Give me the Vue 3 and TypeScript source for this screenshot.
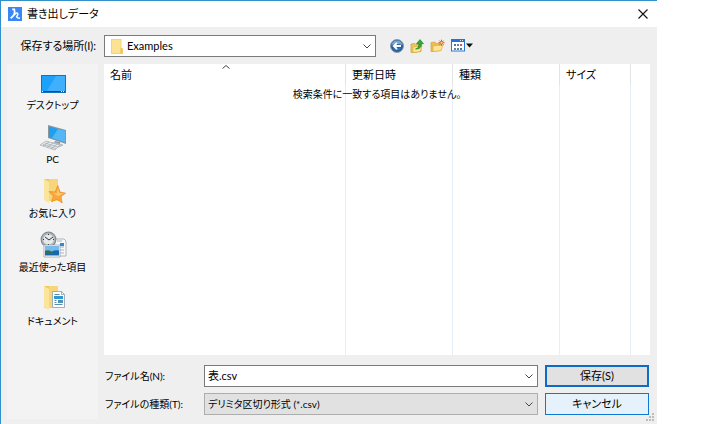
<script setup lang="ts">
import { ref } from 'vue'

type PlaceIcon = 'desktop' | 'pc' | 'favorites' | 'recent' | 'documents'

interface Place {
  icon: PlaceIcon
  label: string
}

const places: Place[] = [
  { icon: 'desktop', label: 'デスクトップ' },
  { icon: 'pc', label: 'PC' },
  { icon: 'favorites', label: 'お気に入り' },
  { icon: 'recent', label: '最近使った項目' },
  { icon: 'documents', label: 'ドキュメント' },
]

const folder = ref('Examples')
const fileName = ref('表.csv')
const fileType = ref('csv')
</script>

<template>
  <main class="page">
    <form class="dialog" @submit.prevent>
      <header class="titlebar">
        <svg class="app-icon" viewBox="0 0 14 14" aria-hidden="true">
          <rect width="14" height="14" fill="#3b86f7" />
          <path d="M4.200 2.300H6.300C7.200 5.500 6 9 2.600 11.300" fill="none" stroke="#fff" stroke-width="1.700" />
          <path d="M6.300 8.200C7.200 6.300 8.800 5.600 9.700 6.500C10.600 7.600 8.800 9 8.600 9.800C9.200 10.900 10.500 11.100 12 11.200" fill="none" stroke="#fff" stroke-width="1.500" />
        </svg>
        <h1>書き出しデータ</h1>
        <button class="close" type="button" aria-label="閉じる">
          <svg viewBox="0 0 10 10"><path d="M.5.5l9 9M9.500.5l-9 9" fill="none" stroke="#111" stroke-width="1.1" /></svg>
        </button>
      </header>

      <div class="location">
        <label for="folder">保存する場所(I):</label>
        <div class="combo folder">
          <svg class="folder-icon" viewBox="0 0 12 15" aria-hidden="true">
            <path d="M0 0h10.500v9l1.500 1v5H0z" fill="#f5d374" />
            <path d="M1 1h8.500v13H1z" fill="#fde294" />
            <path d="M9.500 9.500l2-.5v5.500h-2z" fill="#efc553" />
          </svg>
          <select id="folder" v-model="folder">
            <option>Examples</option>
          </select>
          <svg class="chevron" viewBox="0 0 8 5" aria-hidden="true"><path d="M.5.5L4 4L7.500.5" /></svg>
        </div>
        <div class="tools">
          <button type="button" aria-label="戻る">
            <svg width="14" height="14" viewBox="0 0 14 14">
              <circle cx="7" cy="7" r="6.500" fill="#285f9c" stroke="#8f9ba8" />
              <path d="M1.500 6a5.600 5.600 0 0 1 11 0q-5.500-2-11 0z" fill="#77a8d4" />
              <path d="M3 9a5 5 0 0 0 8 0q-4 2-8 0z" fill="#36a5de" />
              <path d="M11 7H4M7 3.800L3.800 7L7 10.200" fill="none" stroke="#fff" stroke-width="1.900" />
            </svg>
          </button>
          <button type="button" aria-label="上のフォルダーへ">
            <svg width="14" height="14" viewBox="0 0 14 14">
              <path d="M1 5l4-.5 1 1 5-.5v7.500l-7 1H1z" fill="#edc65f" stroke="#d09d31" stroke-width=".7" />
              <path d="M3 8l9-1-2 5.500-7 1z" fill="#ffe995" stroke="#d5a93d" stroke-width=".6" />
              <path d="M5.500 10C8 9.500 9 7.500 8.800 4.700H6.500L10 .6l3.500 4.100h-2C11.500 8 9.500 10.500 5.500 10z" fill="#34a832" stroke="#187c20" stroke-width=".6" />
            </svg>
          </button>
          <button type="button" aria-label="新しいフォルダー">
            <svg width="15" height="14" viewBox="0 0 15 14">
              <path d="M1 3.500l4-.5 1 1.500 5-.5v7.500l-8 1H1z" fill="#edbd55" stroke="#d8a23b" stroke-width=".7" />
              <path d="M3 7l10-1-2 5.500-8 1z" fill="#ffe696" stroke="#dda93f" stroke-width=".6" />
              <path d="M11.500.7v6M8.500 3.700h6M9.400 1.600l4.200 4.200M13.600 1.600L9.400 5.800" stroke="#e7502b" stroke-width="1" />
              <circle cx="11.500" cy="3.700" r="1" fill="#ffe277" />
            </svg>
          </button>
          <button type="button" aria-label="表示メニュー">
            <svg width="22" height="13" viewBox="0 0 22 13">
              <rect x=".5" y=".5" width="13" height="11.500" fill="#fff" stroke="#2877d2" />
              <path d="M0 0h14v3H0z" fill="#2374d5" />
              <path d="M9 1h1v1H9zM11 1h1v1h-1z" fill="#d6e9ff" />
              <path d="M3 5h2v2H3zM9 9h2v2H9z" fill="#4974b9" />
              <path d="M6 5h2v2H6zM3 9h2v2H3z" fill="#7d7896" />
              <path d="M9 5h2v2H9z" fill="#d0624a" />
              <path d="M6 9h2v2H6z" fill="#4b9b63" />
              <path d="M15 4.500h7l-3.500 4z" fill="#111" />
            </svg>
          </button>
        </div>
      </div>

      <div class="content">
        <nav class="places" aria-label="場所">
          <button v-for="place in places" :key="place.icon" class="place" type="button">
            <svg v-if="place.icon === 'desktop'" width="28" height="28" viewBox="0 0 28 28" aria-hidden="true">
              <rect x="2" y="6" width="25" height="18" fill="#1673b8" />
              <rect x="3" y="7" width="23" height="15" fill="#1ca2fb" />
              <path d="M17 7h9v15H8z" fill="#41b0fc" />
              <path d="M3 22h23v1H3z" fill="#124b78" />
              <path d="M3 22h1v1H3zM22 22h1v1h-1zM24 22h1v1h-1z" fill="#fff" />
            </svg>
            <svg v-else-if="place.icon === 'pc'" width="28" height="28" viewBox="0 0 28 28" aria-hidden="true">
              <path d="M16 18l5 1v4l-6-2z" fill="#8e969d" />
              <path d="M12 21l4-2 8 3-4 2z" fill="#c4c9cd" stroke="#969da2" stroke-width=".5" />
              <path d="M9 2l18 5v14L9 15z" fill="#8a969f" />
              <path d="M10 3.500l16 4.300v11.500l-16-5z" fill="#209fed" />
              <path d="M19 6l7 1.800v11.500L13 15z" fill="#55b8f5" />
              <path d="M7 18l14 4-5 5L1 22z" fill="#e7eaec" stroke="#a2a9af" stroke-width=".7" />
              <path d="M6 20l13 4M4 21.500l13 4M10 19l-6 4M14 20l-6 4.500M18 21l-6 5" fill="none" stroke="#a1a8ae" stroke-width=".7" />
            </svg>
            <svg v-else-if="place.icon === 'favorites'" width="28" height="28" viewBox="0 0 28 28" aria-hidden="true">
              <path d="M5 2h14v21H5z" fill="#eec960" />
              <path d="M5 2l5 3v21l-5-3z" fill="#fbe49b" />
              <path d="M10 5V2h9v10l2 1v11H10z" fill="#f6d678" />
              <path d="M18.800 8.500l2.200 6.500 5.500 1.200-4.500 3.300 1.200 6.500-5.200-3.700-5.500 2.500 1.900-5.700-4.400-4.500 6.200.4z" fill="#f8a83d" stroke="#e98520" stroke-width=".7" />
              <path d="M18.900 10.500l1.400 5.500 4.800.6-6.200 2.400-5.500-3.400 4.500.9z" fill="#ffc56b" />
            </svg>
            <svg v-else-if="place.icon === 'recent'" width="28" height="28" viewBox="0 0 28 28" aria-hidden="true">
              <path d="M15 8h10l2 2v15H15z" fill="#f7f8f9" stroke="#9da5ac" stroke-width=".8" />
              <path d="M18 10h5M18 16h7M18 19h7M18 22h7" stroke="#a9b4bd" />
              <path d="M21 12h4v3h-4z" fill="#3689c4" />
              <circle cx="9.500" cy="8.500" r="7.300" fill="#b7bcc0" stroke="#858b8f" stroke-width="1.200" />
              <circle cx="9.500" cy="8.500" r="5.600" fill="#e6e9eb" stroke="#999fa3" stroke-width=".6" />
              <path d="M9.500 3v1M9.500 13v1M4 8.500h1M14 8.500h1M6 6l4 3 4-3" fill="none" stroke="#33383c" stroke-width="1" />
              <path d="M5 14h16v12H5z" fill="#fff" stroke="#8c969e" stroke-width=".7" />
              <path d="M6 15.500h14v9H6z" fill="#1a66ad" />
              <path d="M6 15.500h14v4q-4-1-7 1t-7-1z" fill="#6fbdf1" />
              <path d="M6 20q4-2 7 1t7 1v1H6z" fill="#346f52" />
            </svg>
            <svg v-else width="28" height="28" viewBox="0 0 28 28" aria-hidden="true">
              <path d="M5 1h14v22H5z" fill="#eec960" />
              <path d="M5 1l5 3v21l-5-3z" fill="#fbe49b" />
              <path d="M10 4V1h9v22h-9z" fill="#f6d678" />
              <path d="M13.500 6.500h9l3 3v13h-12z" fill="#fff" stroke="#8d9da8" stroke-width=".8" />
              <path d="M22.500 6.500v3h3" fill="none" stroke="#8d9da8" stroke-width=".8" />
              <path d="M15.500 9.500h5M15.500 15.500h2M15.500 17.500h2M15.500 19.500h8" stroke="#578eae" />
              <path d="M15 11h9v3h-9z" fill="#3097d1" />
              <path d="M19 15h5v3h-5z" fill="#4c91b7" />
            </svg>
            <span>{{ place.label }}</span>
          </button>
        </nav>

        <div class="main">
          <section class="list">
            <table>
              <colgroup>
                <col />
                <col class="medium" />
                <col class="medium" />
                <col class="small" />
                <col class="rest" />
              </colgroup>
              <thead>
                <tr>
                  <th>名前</th>
                  <th>更新日時</th>
                  <th>種類</th>
                  <th>サイズ</th>
                  <td></td>
                </tr>
              </thead>
              <tbody>
                <tr><td v-for="n in 5" :key="n"></td></tr>
              </tbody>
            </table>
            <svg class="sort" viewBox="0 0 8 4" aria-hidden="true"><path d="M.5 3.500L4 .5L7.500 3.500" /></svg>
            <p class="empty">検索条件に一致する項目はありません。</p>
          </section>

          <div class="fields">
            <label for="file-name">ファイル名(N):</label>
            <div class="combo">
              <input id="file-name" v-model="fileName" type="text" />
              <svg class="chevron" viewBox="0 0 8 5" aria-hidden="true"><path d="M.5.5L4 4L7.500.5" /></svg>
            </div>
            <button class="action save" type="submit">保存(S)</button>

            <label for="file-type">ファイルの種類(T):</label>
            <div class="combo type">
              <select id="file-type" v-model="fileType">
                <option value="csv">デリミタ区切り形式 (*.csv)</option>
              </select>
              <svg class="chevron" viewBox="0 0 8 5" aria-hidden="true"><path d="M.5.5L4 4L7.500.5" /></svg>
            </div>
            <button class="action cancel" type="button">キャンセル</button>
          </div>
        </div>
      </div>

      <svg class="grip" viewBox="0 0 8 8" aria-hidden="true">
        <path d="M6 0h2v2H6zM3 3h2v2H3zM6 3h2v2H6zM0 6h2v2H0zM3 6h2v2H3zM6 6h2v2H6z" fill="#bcbcbc" />
      </svg>
    </form>
  </main>
</template>

<style>
body {
  margin: 0;
  background: #fff;
}
</style>

<style scoped>
* {
  box-sizing: border-box;
}

.page {
  display: flex;
  min-height: 100vh;
  padding-right: 71px;
  color: #000;
  font-family: Lato, "Noto Sans CJK JP", sans-serif;
  font-size: 11px;
  line-height: 16px;
  font-feature-settings: "palt";
}

.dialog {
  position: relative;
  display: flex;
  flex: 1;
  flex-direction: column;
  border-top: 1px solid #3390cb;
  border-left: 1px solid #3390cb;
  background: #efefef;
}

button,
input,
select {
  margin: 0;
  border: 0;
  border-radius: 0;
  color: inherit;
  font: inherit;
  font-feature-settings: inherit;
}

button {
  padding: 0;
  background: none;
}

svg {
  display: block;
}

.titlebar {
  display: flex;
  align-items: center;
  height: 26px;
  padding: 0 9px 0 7px;
  background: #fff;
}

.app-icon {
  width: 14px;
  height: 14px;
}

h1 {
  flex: 1;
  margin: 0 0 0 5px;
  font-size: 11px;
  font-weight: 400;
}

.close svg {
  width: 10px;
  height: 10px;
}

.location {
  display: flex;
  align-items: center;
  height: 37px;
}

.location label {
  width: 95px;
  margin-right: 8px;
  text-align: right;
  white-space: nowrap;
}

.combo {
  position: relative;
  display: flex;
  height: 22px;
  border: 1px solid #7a7a7a;
  background: #fff;
}

.combo select,
.combo input {
  flex: 1;
  width: 100%;
  min-width: 0;
  padding: 0 20px 0 3px;
  appearance: none;
  background: transparent;
  outline: 0;
}

.folder {
  flex: 0 1 272px;
}

.folder .folder-icon + select {
  padding-left: 22px;
}

.folder-icon {
  position: absolute;
  top: 3px;
  left: 6px;
  width: 12px;
  height: 15px;
}

.chevron {
  position: absolute;
  top: 8px;
  right: 4px;
  width: 8px;
  height: 5px;
  pointer-events: none;
}

.chevron path,
.sort path {
  fill: none;
  stroke: #444;
}

.tools {
  display: flex;
  align-items: center;
  gap: 6px;
  margin-left: 14px;
}

.content {
  display: flex;
  flex: 1;
  gap: 6px;
  padding: 0 7px 5px 6px;
}

.places {
  display: flex;
  flex: 0 0 91px;
  flex-direction: column;
  gap: 10px;
  padding-top: 5px;
  background: #f3f3f3;
}

.place {
  display: flex;
  flex-direction: column;
  align-items: center;
  font-size: 10px;
  white-space: nowrap;
}

.main {
  display: flex;
  flex: 1;
  flex-direction: column;
  gap: 10px;
  min-width: 0;
  padding-bottom: 4px;
}

.list {
  position: relative;
  display: flex;
  flex: 1;
  background: #fff;
}

table {
  width: 100%;
  table-layout: fixed;
  border-collapse: separate;
  border-spacing: 0;
}

.medium {
  width: 107px;
}

.small {
  width: 71px;
}

.rest {
  width: 19px;
}

th,
td {
  padding: 0;
  border-right: 1px solid #e3e3e3;
}

th {
  height: 21px;
  padding-left: 6px;
  font-weight: 400;
  text-align: left;
}

tbody td {
  border-color: #e6eff8;
}

td:last-child {
  border: 0;
}

.sort {
  position: absolute;
  top: 1px;
  left: 118px;
  width: 8px;
  height: 4px;
}

.empty {
  position: absolute;
  top: 22px;
  right: 0;
  left: 0;
  margin: 0;
  font-size: 10px;
  text-align: center;
}

.fields {
  display: grid;
  grid-template-columns: 93px 1fr 104px;
  gap: 6px 7px;
  align-items: center;
  padding-right: 1px;
}

.fields label {
  padding-left: 1px;
  font-size: 10px;
  white-space: nowrap;
}

.type {
  border-color: #adadad;
  background: #e1e1e1;
}

.type select {
  font-size: 10px;
}

.action {
  height: 22px;
}

.save {
  border: 2px solid #0f6cc6;
  background: #e1e1e1;
}

.cancel {
  border: 1px solid #0f78d4;
  background: #e5f1fb;
}

.grip {
  position: absolute;
  right: 3px;
  bottom: 3px;
  width: 8px;
  height: 8px;
}
</style>
